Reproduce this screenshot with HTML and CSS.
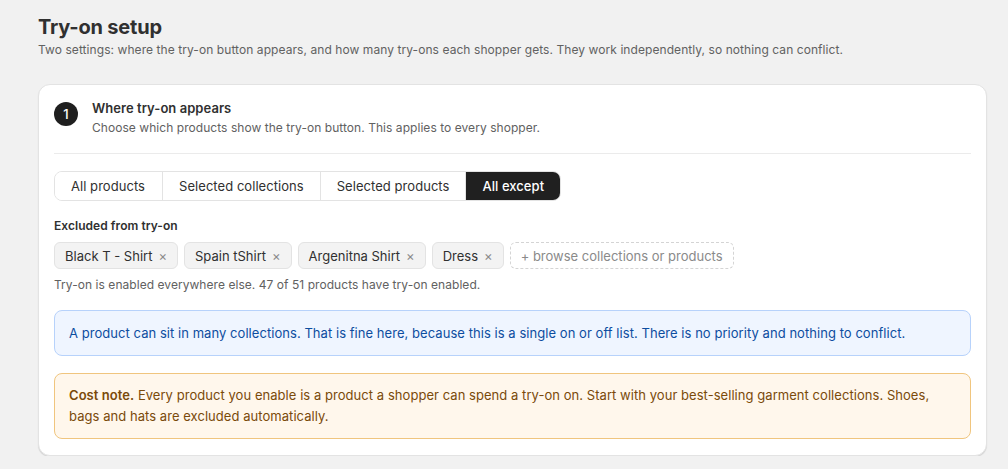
FILE: index.html
```html
<!DOCTYPE html>
<html>
<head>
<meta charset="utf-8">
<link rel="stylesheet" href="styles.css">
</head>
<body>
<div class="page">
  <h1 class="title">Try-on setup</h1>
  <p class="subtitle">Two settings: where the try-on button appears, and how many try-ons each shopper gets. They work independently, so nothing can conflict.</p>

  <section class="card">
    <div class="card-head">
      <div class="step">1</div>
      <div class="head-text">
        <div class="head-title">Where try-on appears</div>
        <div class="head-sub">Choose which products show the try-on button. This applies to every shopper.</div>
      </div>
    </div>

    <div class="segmented">
      <button class="seg">All products</button>
      <button class="seg">Selected collections</button>
      <button class="seg">Selected products</button>
      <button class="seg active">All except</button>
    </div>

    <div class="label">Excluded from try-on</div>
    <div class="chips">
      <span class="chip">Black T - Shirt <span class="x">×</span></span>
      <span class="chip">Spain tShirt <span class="x">×</span></span>
      <span class="chip">Argenitna Shirt <span class="x">×</span></span>
      <span class="chip">Dress <span class="x">×</span></span>
      <span class="chip add">+ browse collections or products</span>
    </div>
    <div class="note">Try-on is enabled everywhere else. 47 of 51 products have try-on enabled.</div>

    <div class="banner info">A product can sit in many collections. That is fine here, because this is a single on or off list. There is no priority and nothing to conflict.</div>
    <div class="banner warn"><strong>Cost note.</strong> Every product you enable is a product a shopper can spend a try-on on. Start with your best-selling garment collections. Shoes, bags and hats are excluded automatically.</div>
  </section>
</div>
</body>
</html>
```

FILE: styles.css
```css
* { box-sizing: border-box; }
html, body { margin: 0; padding: 0; }
body {
  background: #f1f1f1;
  font-family: Inter, "Noto Sans", "Liberation Sans", sans-serif;
  color: #303030;
  letter-spacing: 0.05px;
}
.page {
  width: 949px;
  margin-left: 38px;
  padding-top: 13px;
}
.title {
  margin: 0;
  font-size: 20px;
  line-height: 28px;
  font-weight: 700;
  color: #303030;
  letter-spacing: -0.2px;
}
.subtitle {
  margin: 0;
  font-size: 12px;
  line-height: 18px;
  color: #616161;
  letter-spacing: 0.07px;
}
.card {
  margin-top: 25px;
  background: #fff;
  border: 1px solid #e3e3e3;
  border-radius: 12px;
  box-shadow: 0 1px 1px rgba(0,0,0,0.12);
  padding: 14px 15px 16px 15px;
}
.card-head {
  display: flex;
  gap: 14px;
  padding-bottom: 16px;
  border-bottom: 1px solid #ebebeb;
}
.step {
  flex: none;
  width: 24px;
  height: 24px;
  margin-top: 3px;
  border-radius: 50%;
  background: #1f1f1f;
  color: #fff;
  font-size: 13px;
  font-weight: 500;
  display: flex;
  align-items: center;
  justify-content: center;
}
.head-title {
  font-size: 13px;
  line-height: 18px;
  font-weight: 600;
  color: #303030;
}
.head-sub {
  margin-top: 2px;
  font-size: 12px;
  line-height: 18px;
  color: #616161;
}
.segmented {
  margin-top: 17px;
  display: inline-flex;
  border: 1px solid #e3e3e3;
  border-radius: 8px;
  overflow: hidden;
  height: 30px;
}
.seg {
  font-family: inherit;
  font-size: 13px;
  letter-spacing: inherit;
  color: #303030;
  background: #fff;
  border: none;
  border-right: 1px solid #e3e3e3;
  padding: 0 16px;
  margin: 0;
  cursor: pointer;
}
.seg:first-child { padding: 0 17px 0 16px; }
.seg:last-child { border-right: none; }
.seg.active {
  background: #202020;
  color: #fff;
  font-weight: 500;
}
.label {
  margin-top: 17px;
  font-size: 12px;
  line-height: 16px;
  font-weight: 600;
  color: #303030;
}
.chips {
  margin-top: 8px;
  display: flex;
  gap: 6px;
  flex-wrap: wrap;
}
.chip {
  display: inline-flex;
  align-items: center;
  gap: 6px;
  height: 27px;
  padding: 0 10px;
  font-size: 13px;
  letter-spacing: 0;
  color: #303030;
  background: #f3f3f3;
  border: 1px solid #e3e3e3;
  border-radius: 6px;
}
.chip .x {
  font-size: 13px;
  color: #8a8a8a;
}
.chip.add {
  background: #fff;
  border: 1px dashed #d4d4d4;
  color: #8a8a8a;
}
.note {
  margin-top: 8px;
  font-size: 12px;
  line-height: 16px;
  color: #616161;
}
.banner {
  margin-top: 17px;
  padding: 12px 14px;
  border-radius: 8px;
  font-size: 13px;
  line-height: 20px;
}
.banner.info {
  background: #eff5ff;
  border: 1px solid #b7d2fb;
  color: #0d4da0;
}
.banner.warn {
  background: #fff7ec;
  border: 1px solid #f0c57e;
  color: #7a4a0a;
  line-height: 21px;
  padding: 11px 14px;
}
.banner.warn strong { font-weight: 600; }
```
